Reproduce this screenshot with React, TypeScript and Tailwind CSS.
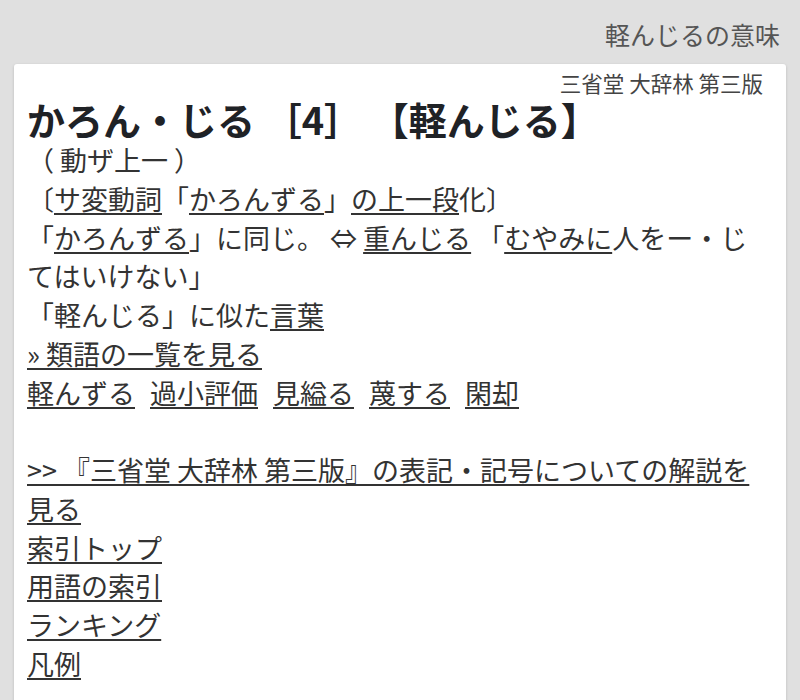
import React from "react";

const U = ({ children }: { children: React.ReactNode }) => (
  <a href="#" className="underline decoration-[#333] decoration-[1.5px] underline-offset-[3px]">
    {children}
  </a>
);

export default function App() {
  return (
    <div
      className="min-h-screen w-full bg-[#e0e0e0] overflow-hidden"
      style={{ fontFamily: '"Noto Sans CJK JP", "Noto Sans", sans-serif' }}
    >
      <div className="pt-[19px] pr-5 text-right text-[25px] leading-[30px] text-[#555]">
        軽んじるの意味
      </div>
      <div className="mx-[14px] mt-[15px] rounded-[3px] bg-white pt-[5px] pb-8 pl-[13px] pr-[23px] shadow-[0_1px_3px_rgba(0,0,0,0.18)]">
        <div className="mb-[3px] text-right text-[21.5px] leading-[27px] text-[#444]">
          三省堂 大辞林 第三版
        </div>
        <div className="text-[38px] font-bold leading-[40px] text-[#1f2226] whitespace-nowrap">
          かろん・じる ［4］ 【軽んじる】
        </div>
        <div className="mt-[2px] text-[27px] leading-[38.75px] text-[#333]">
          <div>（ 動ザ上一 ）</div>
          <div>
            〔<U>サ変動詞</U>「<U>かろんずる</U>」<U>の上一段</U>化〕
          </div>
          <div>
            「<U>かろんずる</U>」に同じ。 ⇔ <U>重んじる</U> 「<U>むやみに</U>人をー・じてはいけない」
          </div>
          <div>
            「軽んじる」に似た<U>言葉</U>
          </div>
          <div>
            <U>» 類語の一覧を見る</U>
          </div>
          <div className="flex flex-wrap gap-x-[15px]">
            <U>軽んずる</U>
            <U>過小評価</U>
            <U>見縊る</U>
            <U>蔑する</U>
            <U>閑却</U>
          </div>
          <div className="h-[38.75px]" />
          <div>
            <U>&gt;&gt; 『三省堂 大辞林 第三版』の表記・記号についての解説を見る</U>
          </div>
          <div>
            <U>索引トップ</U>
          </div>
          <div>
            <U>用語の索引</U>
          </div>
          <div>
            <U>ランキング</U>
          </div>
          <div>
            <U>凡例</U>
          </div>
        </div>
      </div>
    </div>
  );
}
